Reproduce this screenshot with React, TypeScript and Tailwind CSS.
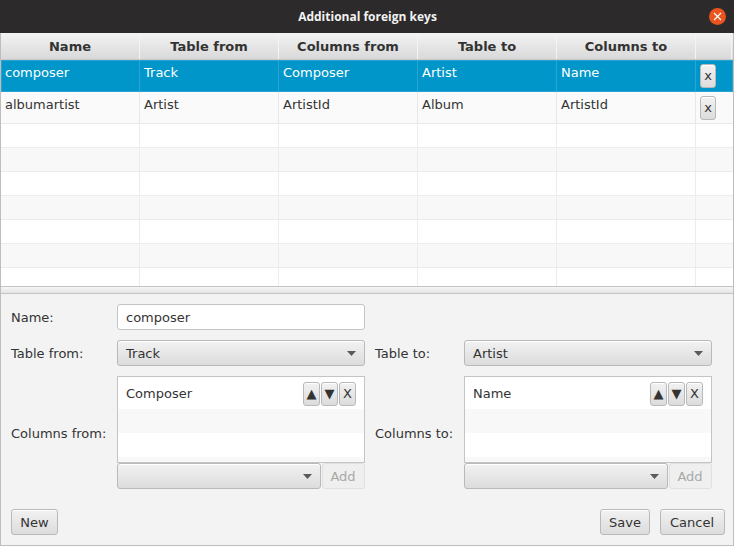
import { ReactNode } from "react";

const columns = ["Name", "Table from", "Columns from", "Table to", "Columns to"];

const rows = [
  ["composer", "Track", "Composer", "Artist", "Name"],
  ["albumartist", "Artist", "ArtistId", "Album", "ArtistId"],
];

const emptyRows = [0, 1, 2, 3, 4, 5, 6];

const btn =
  "rounded-[3px] border border-[#b9b9b9] bg-gradient-to-b from-[#f2f2f2] to-[#dcdcdc] text-[#333] shadow-[inset_0_1px_0_#fff]";

function Arrow() {
  return (
    <svg width="9" height="5" viewBox="0 0 9 5">
      <path d="M0 0H9L4.5 5Z" fill="#5a5a5a" />
    </svg>
  );
}

function Combo({ value, className }: { value?: string; className: string }) {
  return (
    <div className={`${btn} flex h-[26px] items-center justify-between pl-[8px] pr-[8px] ${className}`}>
      <span className="pt-[1px]">{value}</span>
      <Arrow />
    </div>
  );
}

function MiniButton({ children }: { children: ReactNode }) {
  return (
    <div className={`${btn} flex h-[24px] w-[17px] items-center justify-center text-[13px] leading-none`}>
      {children}
    </div>
  );
}

function ColumnList({ value }: { value: string }) {
  return (
    <div className="flex h-[113px] flex-col">
      <div className="flex h-[87px] flex-col border border-[#c4c4c4] bg-white">
        <div className="flex h-[32px] shrink-0 items-center justify-between pl-[8px] pr-[8px]">
          <span className="pt-[1px]">{value}</span>
          <div className="flex gap-px pt-[1px]">
            <MiniButton>▲</MiniButton>
            <MiniButton>▼</MiniButton>
            <MiniButton>X</MiniButton>
          </div>
        </div>
        <div className="h-[24px] shrink-0 bg-[#f8f8f8]" />
        <div className="h-[24px] shrink-0 bg-white" />
        <div className="flex-1 bg-[#f8f8f8]" />
      </div>
      <div className="flex h-[26px] gap-px">
        <Combo className="w-[204px]" />
        <div className="flex h-[26px] flex-1 items-center justify-center rounded-[3px] border border-[#e0e0e0] bg-[#efefef] pr-[1px] pt-[1px] text-[#a8a8a8]">
          Add
        </div>
      </div>
    </div>
  );
}

export default function App() {
  return (
    <div className="flex h-[546px] w-[734px] flex-col overflow-hidden bg-[#2c2a2a] font-['DejaVu_Sans',sans-serif] text-[13px] text-[#333]">
      {/* Title bar */}
      <div className="relative flex h-[33px] shrink-0 items-center justify-center rounded-t-[10px] bg-[#2c2a2a]">
        <span className="pl-[1px] font-['Open_Sans',sans-serif] text-[12px] font-bold text-[#f2f2f2]">Additional foreign keys</span>
        <div className="absolute right-[8px] top-[8px] flex h-[17px] w-[17px] items-center justify-center rounded-full bg-[#e95420]">
          <svg width="9" height="9" viewBox="0 0 9 9">
            <path d="M1 1L8 8M8 1L1 8" stroke="#fff" strokeWidth="1.2" />
          </svg>
        </div>
      </div>

      <div className="flex flex-1 flex-col border-x border-b border-[#bdbdbd] bg-[#f3f3f3]">
        {/* Table */}
        <div className="h-[253px] shrink-0 overflow-hidden bg-white">
          <div className="flex h-[27px] border-b border-[#c8c8c8] bg-gradient-to-b from-[#f3f3f3] to-[#d9d9d9]">
            {columns.map((c) => (
              <div
                key={c}
                className="flex w-[139px] items-center justify-center border-r border-[#f4f4f4] pt-[2px] text-[13px] font-bold text-[#333]"
              >
                {c}
              </div>
            ))}
            <div className="w-[36px] border-r border-[#f4f4f4]" />
          </div>
          {rows.map((row, i) => (
            <div
              key={row[0]}
              className={
                i === 0
                  ? "flex h-[32px] bg-[#0096c9] text-white shadow-[inset_0_0_0_1px_#2aa3d1]"
                  : "flex h-[32px] border-b border-[#e8e8e8] bg-[#fafafa]"
              }
            >
              {row.map((cell) => (
                <div
                  key={cell}
                  className={`w-[139px] border-r pl-[4px] pt-[1px] leading-[24px] ${i === 0 ? "border-[#2aa3d1]" : "border-[#e8e8e8]"}`}
                >
                  {cell}
                </div>
              ))}
              <div className="flex w-[36px] justify-start pl-[4px] pt-[4px]">
                <div className={`${btn} flex h-[24px] w-[16px] items-center justify-center text-[#333]`}>x</div>
              </div>
            </div>
          ))}
          {emptyRows.map((n) => (
            <div
              key={n}
              className={`flex h-[24px] border-b border-[#ececec] ${n % 2 === 0 ? "bg-white" : "bg-[#f8f8f8]"}`}
            >
              {columns.map((c) => (
                <div key={c} className="w-[139px] border-r border-[#ececec]" />
              ))}
              <div className="w-[36px]" />
            </div>
          ))}
        </div>

        {/* Splitter */}
        <div className="h-[8px] shrink-0 border-y border-[#c4c4c4] bg-gradient-to-b from-[#f6f6f6] to-[#e4e4e4]" />

        {/* Form */}
        <div className="flex flex-1 flex-col pl-[10px] pr-[8px] pt-[10px]">
          <div className="grid grid-cols-[96px_248px_79px_248px] grid-rows-[26px_26px_113px] items-center gap-x-[10px] gap-y-[10px]">
            <span className="pt-[1px]">Name:</span>
            <div className="flex h-[26px] items-center rounded-[3px] border border-[#c4c4c4] bg-white pl-[8px] pt-[1px]">composer</div>
            <span />
            <span />

            <span className="pt-[1px]">Table from:</span>
            <Combo value="Track" className="w-[248px]" />
            <span className="pt-[1px]">Table to:</span>
            <Combo value="Artist" className="w-[248px]" />

            <span className="pt-[2px]">Columns from:</span>
            <ColumnList value="Composer" />
            <span className="pt-[2px]">Columns to:</span>
            <ColumnList value="Name" />
          </div>

          <div className="mt-[20px] flex items-center justify-between">
            <div className={`${btn} flex h-[26px] w-[47px] items-center justify-center pt-[1px]`}>New</div>
            <div className="flex gap-[10px]">
              <div className={`${btn} flex h-[26px] w-[50px] items-center justify-center pt-[1px]`}>Save</div>
              <div className={`${btn} flex h-[26px] w-[65px] items-center justify-center pr-[1px] pt-[1px]`}>Cancel</div>
            </div>
          </div>
        </div>
      </div>
    </div>
  );
}
